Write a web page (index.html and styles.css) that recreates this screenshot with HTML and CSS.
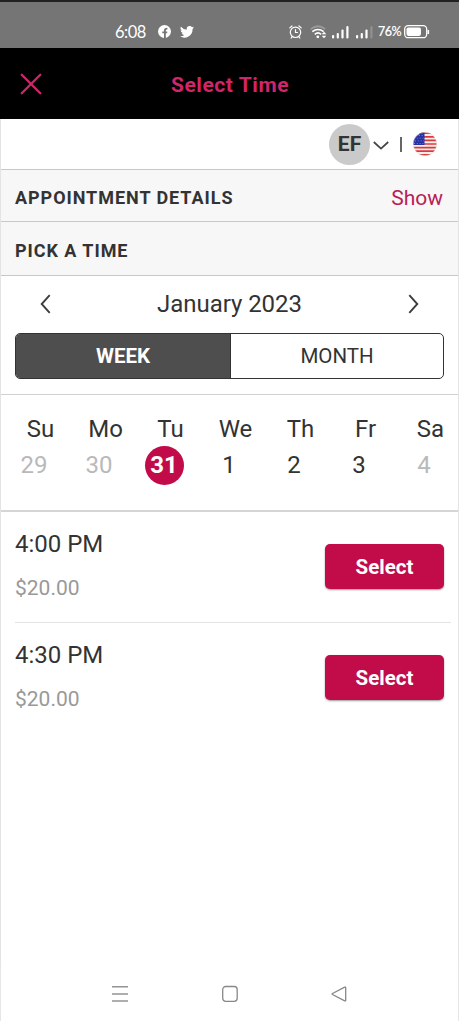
FILE: index.html
```html
<!DOCTYPE html>
<html lang="en">
<head>
<meta charset="utf-8">
<title>Select Time</title>
<link rel="stylesheet" href="styles.css">
</head>
<body>
<div class="phone">
  <div class="status">
    <span class="clock">6:08</span>
    <svg class="fb" width="13" height="13" viewBox="0 0 13 13"><circle cx="6.5" cy="6.5" r="6.5" fill="#fff"/><path d="M6.900 13V5.200Q6.900 3.500 9.400 3.600M4.300 7.400H9.200" fill="none" stroke="#757575" stroke-width="1.800"/></svg>
    <svg class="tw" width="14" height="12" viewBox="0 0 24 20"><path fill="#fff" d="M24 2.400a10 10 0 0 1-2.800.8A5 5 0 0 0 23.300.4a10 10 0 0 1-3.100 1.200A4.900 4.900 0 0 0 11.700 6.100 14 14 0 0 1 1.700.9a4.900 4.900 0 0 0 1.500 6.600 4.900 4.900 0 0 1-2.200-.6 4.900 4.900 0 0 0 3.900 4.900 5 5 0 0 1-2.200.1 4.900 4.900 0 0 0 4.600 3.400A9.900 9.900 0 0 1 0 17.300 14 14 0 0 0 21.500 4.900 10 10 0 0 0 24 2.400z"/></svg>
    <div class="indicators">
      <svg width="13" height="14" viewBox="0 0 13 14" fill="none" stroke="#fff" stroke-width="1.200" stroke-linecap="round"><circle cx="6.500" cy="7.300" r="5.200"/><path d="M6.500 4.700V7.500H8.500M.8 2.900 3 1M12.200 2.900 10 1M3.200 11.700 2.200 13M9.800 11.700l1 1.300"/></svg>
      <svg class="wifi" width="17" height="14" viewBox="0 0 17 14" fill="none" stroke="#fff" stroke-width="1.700"><path d="M.7 4.200Q8 -1.700 15.300 4.200" stroke="#999"/><path d="M2.300 6.700Q8 2.300 13.700 6.700M4.800 9.300Q8 6.600 11.100 9.300"/><circle cx="7.800" cy="11.800" r="1.400" fill="#fff" stroke="none"/><path fill="#fff" stroke="none" d="M11.700 9.300 14 6.700l2.300 2.600zM11.700 10.700 14 13.300l2.300-2.600z"/></svg>
      <svg class="sig1" width="17" height="14" viewBox="0 0 17 14" fill="#fff"><rect y="10" width="2.200" height="3.500" rx="1"/><rect x="4.700" y="8" width="2.200" height="5.500" rx="1"/><rect x="9.400" y="4.500" width="2.200" height="9" rx="1"/><rect x="14.300" y="1" width="2.200" height="12.500" rx="1"/></svg>
      <svg class="sig2" width="17" height="14" viewBox="0 0 17 14" fill="#fff"><rect y="10" width="2.200" height="3.500" rx="1"/><rect x="4.700" y="8" width="2.200" height="5.500" rx="1"/><rect x="9.400" y="4.500" width="2.200" height="9" rx="1"/><rect x="14.300" y="1" width="2.200" height="12.500" rx="1" fill="#919191"/></svg>
      <span class="percent">76%</span>
      <svg class="battery" width="26" height="14" viewBox="0 0 26 14"><rect x=".7" y=".7" width="22" height="12" rx="3.500" fill="none" stroke="#fff" stroke-width="1.300"/><rect x="2.500" y="2.500" width="14.500" height="8.400" rx="1.800" fill="#fff"/><path d="M24.300 5v4" stroke="#fff" stroke-width="1.600"/></svg>
    </div>
  </div>
  <header class="titlebar">
    <svg class="close" width="22" height="22" viewBox="0 0 22 22"><path d="M1.700 1.700 20.300 20.300M20.300 1.700 1.700 20.300" stroke="#d12569" stroke-width="2.300" stroke-linecap="round"/></svg>
    <h1>Select Time</h1>
  </header>
  <main class="page">
    <div class="account">
      <span class="avatar">EF</span>
      <svg class="caret" width="16" height="9" viewBox="0 0 16 9"><path d="M.8 1 8 7.600 15.200 1" fill="none" stroke="#444" stroke-width="1.700"/></svg>
      <span class="divider"></span>
      <svg class="flag" width="24" height="24" viewBox="0 0 24 24"><defs><clipPath id="disc"><circle cx="12" cy="12" r="11.700"/></clipPath></defs><g clip-path="url(#disc)"><path fill="#f5efea" d="M0 0h24v24H0z"/><path d="M0 1.200h24M0 4.800h24M0 8.400h24M0 12h24M0 15.600h24M0 19.200h24M0 22.800h24" stroke="#db3940" stroke-width="1.700"/><path fill="#2531a5" d="M0 0h11.500v13H0z"/><path d="M3 3.500h8M1 6.200h10M2 8.900h9M1 11.500h10" stroke="#8c94d4" stroke-width=".8" stroke-dasharray="1 1.800"/></g><circle cx="12" cy="12" r="11.700" fill="none" stroke="#e3d7d0" stroke-width=".5"/></svg>
    </div>
    <div class="section details"><h2>APPOINTMENT DETAILS</h2><a class="show">Show</a></div>
    <div class="section pick"><h2>PICK A TIME</h2></div>
    <div class="picker">
      <div class="month">
        <svg width="11" height="20" viewBox="0 0 11 20"><path d="M9.700 1.200 1.700 10l8 8.800" fill="none" stroke="#3d3d3d" stroke-width="1.900"/></svg>
        <span>January 2023</span>
        <svg width="11" height="20" viewBox="0 0 11 20"><path d="M1.300 1.200 9.300 10l-8 8.800" fill="none" stroke="#3d3d3d" stroke-width="1.900"/></svg>
      </div>
      <div class="toggle"><span class="active">WEEK</span><span>MONTH</span></div>
    </div>
    <div class="week">
      <div class="day"><span class="name">Su</span><span class="date off">29</span></div>
      <div class="day"><span class="name">Mo</span><span class="date off">30</span></div>
      <div class="day"><span class="name">Tu</span><span class="date chosen">31</span></div>
      <div class="day"><span class="name">We</span><span class="date">1</span></div>
      <div class="day"><span class="name">Th</span><span class="date">2</span></div>
      <div class="day"><span class="name">Fr</span><span class="date">3</span></div>
      <div class="day"><span class="name">Sa</span><span class="date off">4</span></div>
    </div>
    <div class="slots">
      <div class="slot"><div><div class="time">4:00 PM</div><div class="price">$20.00</div></div><button class="select">Select</button></div>
      <div class="slot"><div><div class="time">4:30 PM</div><div class="price">$20.00</div></div><button class="select">Select</button></div>
    </div>
  </main>
  <nav class="navbar">
    <svg width="18" height="18" viewBox="0 0 18 18"><path d="M1 1.800h16M1 8.900h16M1 15.900h16" stroke="#949494" stroke-width="1.500"/></svg>
    <svg width="18" height="18" viewBox="0 0 18 18"><rect x="1.700" y="1.500" width="14.500" height="14.800" rx="3" fill="none" stroke="#888" stroke-width="1.300"/></svg>
    <svg width="18" height="18" viewBox="0 0 18 18"><path d="M15.700 2.700v12.600q0 1-1 .5L2.500 9.500q-1-.5 0-1l12.200-6.300q1-.5 1 .5z" fill="none" stroke="#888" stroke-width="1.300"/></svg>
  </nav>
</div>
</body>
</html>
```
FILE: styles.css
```css
* { box-sizing: border-box; }
body { margin: 0; background: #fff; color: #333; font-family: Roboto, sans-serif; }
svg { display: block; flex: none; }
h1, h2 { margin: 0; }
.phone { width: 459px; height: 1021px; display: flex; flex-direction: column; overflow: hidden; }
.status { height: 48px; flex: none; background: #757575; border-top: 2px solid #222; display: flex; align-items: center; padding: 13px 29px 0 115px; color: #fff; }
.clock { font: 16.500px/20px Lato, sans-serif; letter-spacing: -.5px; width: 31px; }
.fb { margin-left: 12px; }
.tw { margin-left: 9px; }
.indicators { margin-left: auto; display: flex; align-items: center; }
.wifi { margin-left: 8px; }
.sig1 { margin-left: 5px; }
.sig2 { margin-left: 7px; }
.percent { font: 500 12.500px/16px Lato, sans-serif; letter-spacing: -.5px; -webkit-text-stroke: .15px #fff; margin-left: 5px; width: 23px; white-space: nowrap; }
.battery { margin-left: 3px; }
.titlebar { height: 71px; flex: none; background: #000; display: flex; align-items: center; padding-left: 20px; }
.titlebar h1 { margin-left: 129px; font-size: 21px; line-height: 28px; font-weight: 700; letter-spacing: .55px; color: #d12569; padding-top: 2px; }
.page { flex: 1; border: 1px solid #e4e4e4; border-width: 0 1px; }
.account { height: 50px; display: flex; align-items: center; justify-content: flex-end; padding-right: 21px; }
.avatar { width: 41px; height: 41px; border-radius: 50%; background: #cacaca; display: flex; align-items: center; justify-content: center; font-size: 21px; font-weight: 700; }
.caret { margin: 3px 0 0 3px; }
.divider { width: 2px; height: 15px; background: #666; margin: 0 11px 0 11px; }
.section { background: #f7f7f7; border-top: 1px solid #c8c8c8; display: flex; align-items: center; justify-content: space-between; padding: 5px 15px 0 14px; }
.section h2 { font-size: 18px; line-height: 24px; font-weight: 700; letter-spacing: .95px; }
.details { height: 52px; }
.pick { height: 54px; padding-top: 4px; }
.show { color: #b82058; font-size: 21px; }
.picker { height: 119px; border-top: 1px solid #c8c8c8; padding: 9px 14px 0; }
.month { height: 38px; display: flex; align-items: center; justify-content: space-between; padding: 0 25px; font-size: 24px; letter-spacing: -.05px; }
.toggle { height: 46px; margin-top: 10px; display: grid; grid-template-columns: 215px 1fr; border: 1px solid #333; border-radius: 5px; overflow: hidden; font-size: 20.500px; }
.toggle span { display: flex; align-items: center; justify-content: center; }
.toggle .active { background: #4e4e4e; color: #fff; font-weight: 700; border-right: 1px solid #333; }
.week { height: 116px; border-top: 1px solid #d0d0d0; display: grid; grid-template-columns: repeat(7, 65px); align-content: start; padding: 17px 0 0; }
.day { display: flex; flex-direction: column; align-items: center; font-size: 24px; }
.name { line-height: 34px; padding-left: 14px; }
.date { width: 39px; height: 39px; line-height: 39px; text-align: center; }
.day .date { margin-left: 1px; }
.off { color: #b9b9b9; }
.chosen { background: #c20c4a; border-radius: 50%; color: #fff; font-weight: 700; }
.slots { border-top: 2px solid #d5d5d5; padding: 0 7px 0 14px; }
.slot { height: 111px; display: flex; justify-content: space-between; padding: 16px 7px 0 0; }
.slot:first-child { height: 110px; }
.slot + .slot { border-top: 1px solid #e3e3e3; }
.time { font-size: 24px; line-height: 32px; }
.price { margin-top: 14px; font-size: 21px; line-height: 28px; color: #999; }
.select { width: 119px; height: 45px; margin-top: 16px; padding: 1px 0 0; border: 0; border-radius: 5px; background: #c20c4a; color: #fff; font: 700 20.500px/44px Roboto, sans-serif; box-shadow: 0 1px 2px #0006; }
.navbar { height: 54px; flex: none; display: flex; justify-content: space-between; padding: 18px 110px 0; border: solid #e6e6e6; border-width: 0 1px; }
```
